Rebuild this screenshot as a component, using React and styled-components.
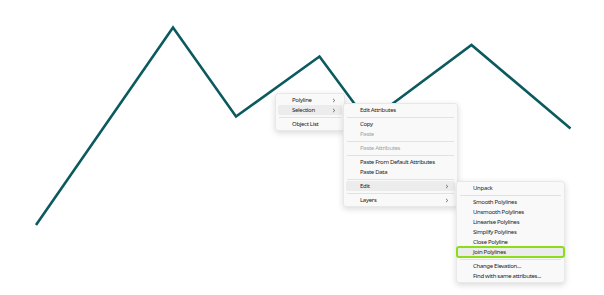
import React from 'react'
import styled, { createGlobalStyle } from 'styled-components'

const GlobalStyle = createGlobalStyle`
  html, body {
    margin: 0;
    padding: 0;
    background: #ffffff;
  }
`

const Canvas = styled.div`
  position: relative;
  width: 604px;
  height: 295px;
  overflow: hidden;
  background: #ffffff;
  font-family: 'Noto Sans', 'Open Sans', sans-serif;
`

const Drawing = styled.svg`
  display: block;
`

const Menu = styled.div`
  position: absolute;
  left: ${(p) => p.$left}px;
  top: ${(p) => p.$top}px;
  width: ${(p) => p.$width}px;
  z-index: ${(p) => p.$layer};
  box-sizing: border-box;
  display: flex;
  flex-direction: column;
  padding: 1px 0;
  background: #f9f9f9;
  border: 1px solid #e8e8e8;
  border-radius: 3px;
  box-shadow: 0 2px 6px rgba(0, 0, 0, 0.15);
`

const Row = styled.div`
  height: 10px;
  display: flex;
  align-items: center;
  justify-content: space-between;
  margin: 0 ${(p) => (p.$picked ? 0 : 2)}px;
  padding: 0 6px 0 ${(p) => (p.$picked ? 16 : 14)}px;
  border-radius: 2px;
  font-size: 6px;
  letter-spacing: -0.3px;
  white-space: nowrap;
  color: ${(p) => (p.$disabled ? '#a3a3a3' : '#1c1c1c')};
  background: ${(p) => (p.$active || p.$picked ? '#ececec' : 'transparent')};
  outline: ${(p) => (p.$picked ? '2px solid #8ddc1c' : 'none')};
  outline-offset: -1px;
`

const Separator = styled.div`
  height: 1px;
  margin: 1.5px 3px;
  background: #e2e2e2;
`

const Chevron = () => (
  <svg width='4' height='5' viewBox='0 0 4 5'>
    <path d='M1 0.8 L2.8 2.5 L1 4.2' fill='none' stroke='#444' strokeWidth='0.7' />
  </svg>
)

const Item = ({ label, sub, ...rest }) => (
  <Row {...rest}>
    <span>{label}</span>
    {sub && <Chevron />}
  </Row>
)

const App = () => {
  return (
    <>
      <GlobalStyle />
      <Canvas>
        <Drawing width='604' height='295'>
          <polyline
            points='36,225 173,27.5 236,116.5 319.5,56.5 368,122 471.5,45 570.5,128.5'
            fill='none'
            stroke='#0b5a5e'
            strokeWidth='2.6'
          />
        </Drawing>

        <Menu $left={275} $top={93} $width={70} $layer={1}>
          <Item label='Polyline' sub />
          <Item label='Selection' sub $active />
          <Separator />
          <Item label='Object List' />
        </Menu>

        <Menu $left={343} $top={103} $width={115} $layer={2}>
          <Item label='Edit Attributes' />
          <Separator />
          <Item label='Copy' />
          <Item label='Paste' $disabled />
          <Separator />
          <Item label='Paste Attributes' $disabled />
          <Separator />
          <Item label='Paste From Default Attributes' />
          <Item label='Paste Data' />
          <Separator />
          <Item label='Edit' sub $active />
          <Separator />
          <Item label='Layers' sub />
        </Menu>

        <Menu $left={456} $top={181} $width={109} $layer={3}>
          <Item label='Unpack' />
          <Separator />
          <Item label='Smooth Polylines' />
          <Item label='Unsmooth Polylines' />
          <Item label='Linearise Polylines' />
          <Item label='Simplify Polylines' />
          <Item label='Close Polyline' />
          <Item label='Join Polylines' $picked />
          <Separator />
          <Item label='Change Elevation...' />
          <Item label='Find with same attributes...' />
        </Menu>
      </Canvas>
    </>
  )
}

export default App
